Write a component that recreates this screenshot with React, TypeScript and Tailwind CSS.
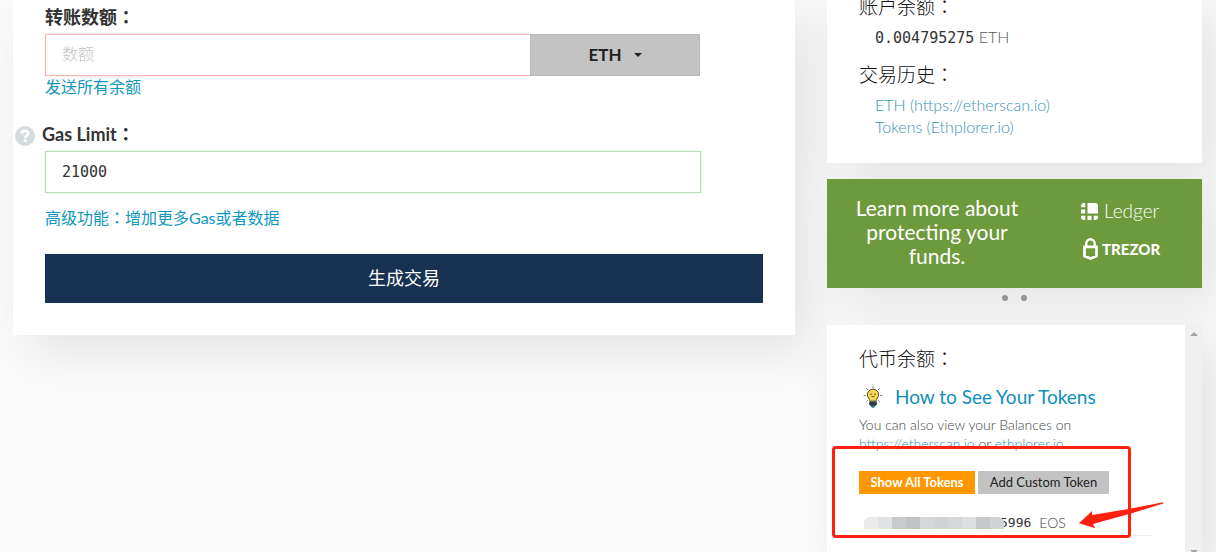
import type { ReactNode } from 'react';

const mosaic = [
  'bg-[#ebeaea]', 'bg-[#e0e2e5]', 'bg-[#c9cacc]', 'bg-[#c2c3c5]', 'bg-[#d6d7d9]',
  'bg-[#d2d3d5]', 'bg-[#d6d7d8]', 'bg-[#dcdee0]', 'bg-[#c7c8ca]', 'bg-[#d2d3d4]',
];

// Full-width colon, centred in its cell
const Colon = () => <span className="font-['Noto_Sans_CJK_TC',sans-serif] leading-none">：</span>;

const SideHeading = ({ className, children }: { className?: string; children: ReactNode }) => (
  <h2 className={`h-6 text-[19px] leading-6 font-light text-[#111] ${className ?? ''}`}>
    {children}
    <Colon />
  </h2>
);

const HelpIcon = () => (
  <svg width="20" height="20" viewBox="0 0 20 20" aria-hidden="true">
    <circle cx="10" cy="10" r="10" fill="#d5dcdd" />
    <path d="M6.800 7.800c0-2 1.400-3 3.200-3s3.200 1 3.200 2.700c0 2.200-3 2.200-3 4.500" fill="none" stroke="#fff" strokeWidth="2.700" />
    <rect x="8.700" y="13.300" width="2.900" height="2.700" rx=".5" fill="#fff" />
  </svg>
);

const BulbIcon = () => (
  <svg width="20" height="22" viewBox="0 0 20 22" aria-hidden="true">
    <g stroke="#7c858e" strokeWidth="1" strokeLinecap="round">
      <path d="M10 .5v1.500M3.500 2.500l1.300 1.300M16.500 2.500l-1.300 1.300M1 9.500h1.500M17.500 9.500H19M3.500 15.500l1-1M16.500 15.500l-1-1" />
    </g>
    <path d="M10 3.200a5.600 5.600 0 0 0-5.600 5.600c0 2.700 2.200 3.900 2.800 6.400h5.600c.6-2.500 2.800-3.700 2.800-6.400A5.600 5.600 0 0 0 10 3.200z" fill="#fdd551" stroke="#4b4534" strokeWidth="1" />
    <circle cx="8" cy="8.300" r=".7" fill="#333" />
    <circle cx="12" cy="8.300" r=".7" fill="#333" />
    <path d="M8.600 10.300q1.400 1 2.800 0" fill="none" stroke="#333" strokeWidth=".8" />
    <path d="M6.200 15.500h7.600v2.800l-1.500 1.700H7.700l-1.500-1.700z" fill="#2c3943" />
    <path d="M7.700 19.700h4.600l-1.200 2H8.900z" fill="#1687a0" />
  </svg>
);

const LedgerIcon = () => (
  <svg width="17" height="17" viewBox="0 0 17 17" fill="#fff" aria-hidden="true">
    <path d="M6.500 0H14a3 3 0 0 1 3 3v7.500H6.500z" />
    <path d="M4.200 0v4.200H0V3a3 3 0 0 1 3-3z" />
    <path d="M0 6.500h4.200v4H0zM6.500 12.800h4V17h-4z" />
    <path d="M0 12.800h4.200V17H3a3 3 0 0 1-3-3zM12.800 12.800H17V14a3 3 0 0 1-3 3h-1.200z" />
  </svg>
);

const TrezorIcon = () => (
  <svg width="15" height="22" viewBox="0 0 15 22" fill="none" stroke="#fff" aria-hidden="true">
    <path d="M3.300 8.500V5.500a4.200 4.200 0 0 1 8.400 0v3" strokeWidth="2.400" />
    <path d="M1.500 8.800h12v9.200l-6 2.500-6-2.500z" strokeWidth="2.700" />
  </svg>
);

const cardShadow = 'shadow-[16px_16px_47px_0_rgba(0,0,0,0.09)]';

const App = () => {
  return (
    <div className="h-screen overflow-hidden bg-[#fafafa] font-[Lato,'Noto_Sans_CJK_SC',sans-serif] text-[#333]">
      <div className="relative grid grid-cols-[782fr_375fr] items-start gap-8 pl-[13px] pr-3.5">
        {/* Send form */}
        <main className={`bg-white px-8 pt-[5px] pb-8 ${cardShadow}`}>
          <label htmlFor="amount" className="mb-[5px] block h-6 text-lg leading-6 font-bold">
            转账数额<Colon />
          </label>
          <div className="mr-[63px] flex">
            <input
              id="amount"
              placeholder="数额"
              className="h-[42px] min-w-0 flex-1 border border-r-0 border-[#f8b3ae] bg-white px-4 pb-1 text-base font-light shadow-[0_0_2px_#fbd5d2] placeholder:text-[#c4c4c4]"
            />
            <button className="flex h-[42px] w-[170px] items-center justify-center gap-3 border border-[#b9b9b9] bg-[#c3c3c3] text-[17px] font-bold text-[#222]">
              ETH
              <svg width="8" height="4" viewBox="0 0 8 4" aria-hidden="true">
                <path d="M0 0h8L4 4z" fill="#222" />
              </svg>
            </button>
          </div>
          <a href="#all" className="block h-[22px] text-base leading-[22px] text-[#0e97c0]">发送所有余额</a>

          <div className="mt-6 mb-[5px] -ml-[30px] flex h-6 items-center gap-[7px]">
            <a href="#help" aria-label="Gas Limit help" className="pt-1"><HelpIcon /></a>
            <label htmlFor="gas" className="h-6 text-lg leading-6 font-bold">
              Gas Limit<Colon />
            </label>
          </div>
          <div className="mr-[62px]">
            <input
              id="gas"
              defaultValue="21000"
              className="block h-[42px] w-full border border-[#b5deb5] bg-white px-4 font-['DejaVu_Sans_Mono',monospace] text-[15px] shadow-[0_0_2px_#d6eed6]"
            />
          </div>
          <a href="#advanced" className="mt-3.5 mb-[25px] block h-[22px] text-base leading-[22px] text-[#0e97c0]">
            高级功能<Colon />增加更多Gas或者数据
          </a>
          <button className="block h-[49px] w-full bg-[#163151] pb-0.5 text-lg text-white">生成交易</button>
        </main>

        <aside>
          {/* Account */}
          <section className={`bg-white px-8 pb-[25px] ${cardShadow}`}>
            <SideHeading className="-mt-[5px]">账户余额</SideHeading>
            <p className="mt-[7px] h-[22px] pl-4 text-base leading-[22px] font-light">
              <span className="font-['DejaVu_Sans_Mono',monospace] text-[15px] leading-none font-normal">0.004795275</span>{' '}
              <span className="text-[#555]">ETH</span>
            </p>
            <SideHeading className="mt-[15px]">交易历史</SideHeading>
            <ul className="mt-[7px] pl-4 text-base leading-[22px] font-light text-[#3a93b8]">
              <li className="h-[22px]"><a href="#etherscan">ETH (https://etherscan.io)</a></li>
              <li className="h-[22px]"><a href="#ethplorer">Tokens (Ethplorer.io)</a></li>
            </ul>
          </section>

          {/* Hardware wallet banner */}
          <section className={`mt-4 flex h-[109px] items-center bg-[#6d9a3c] pb-[3px] pl-[17px] text-white ${cardShadow}`}>
            <p className="w-[186px] text-center text-[21px] leading-6">Learn more about protecting your funds.</p>
            <div className="ml-[51px] flex flex-col gap-3.5 pb-1">
              <div className="flex h-6 items-center gap-1.5">
                <LedgerIcon />
                <span className="text-[19px] leading-6 font-light">Ledger</span>
              </div>
              <div className="flex h-6 items-center gap-1 pl-0.5">
                <TrezorIcon />
                <span className="text-[15px] leading-6 font-black">TREZOR</span>
              </div>
            </div>
          </section>
          <div className="flex h-[37px] justify-center gap-[13px] pt-[7px]">
            <span className="size-1.5 rounded-full bg-[#949494]" />
            <span className="size-1.5 rounded-full bg-[#949494]" />
          </div>

          {/* Token balances */}
          <section className={`flex h-[236px] bg-white ${cardShadow}`}>
            <div className="flex-1 px-8 pt-[22px]">
              <SideHeading>代币余额</SideHeading>
              <a href="#tokens" className="mt-3.5 flex h-6 items-center gap-3 pl-1 text-[19px] leading-6 text-[#0e8fbd]">
                <BulbIcon />
                How to See Your Tokens
              </a>
              <p className="mt-1.5 h-[38px] text-sm leading-[19px] font-light text-[#444]">
                You can also view your Balances on{' '}
                <a href="#es" className="text-[#2f8fb5]">https://etherscan.io</a> or{' '}
                <a href="#ep" className="text-[#2f8fb5]">ethplorer.io</a>
              </p>
              <div className="mt-[18px] flex gap-[3px] text-[13px] leading-[23px]">
                <button className="h-[23px] w-[116px] bg-[#ff9800] font-bold whitespace-nowrap text-white">Show All Tokens</button>
                <button className="h-[23px] w-[131px] bg-[#c3c3c3] whitespace-nowrap text-[#222]">Add Custom Token</button>
              </div>
              <div className="mt-[17px] flex h-[25px] items-center border-b border-[#eee] pl-[5px] whitespace-nowrap">
                <div className="z-10 flex h-3 w-[140px] overflow-hidden rounded-t-md">
                  {mosaic.map((c) => <span key={c} className={`flex-1 ${c}`} />)}
                </div>
                <span className="-ml-1 font-['DejaVu_Sans_Mono',monospace] text-[13px]">5996</span>
                <span className="ml-2 text-sm font-light text-[#444]">EOS</span>
              </div>
            </div>
            <div className="flex w-[17px] flex-col items-center justify-between bg-[#f0f0f0] py-[7px]" aria-hidden="true">
              <svg width="8" height="4" viewBox="0 0 8 4"><path d="M0 4h8L4 0z" fill="#a3a3a3" /></svg>
              <svg width="8" height="4" viewBox="0 0 8 4"><path d="M0 0h8L4 4z" fill="#a3a3a3" /></svg>
            </div>
          </section>
        </aside>

        {/* Callout over the token list */}
        <div className="pointer-events-none absolute top-[446px] right-[85px] z-20 h-[92px] w-[299px] rounded border-[3px] border-[#ff2010]">
          <svg className="absolute top-[50px] left-[243px] overflow-visible" width="88" height="30" viewBox="0 0 88 30" aria-hidden="true">
            <path d="M1 24.300 14 12v4L50.300 10 85.300 3.200v1.200L53.700 14.300 15 25l2.300 4.300z" fill="#ff2010" />
          </svg>
        </div>
      </div>
    </div>
  );
};

export default App;
